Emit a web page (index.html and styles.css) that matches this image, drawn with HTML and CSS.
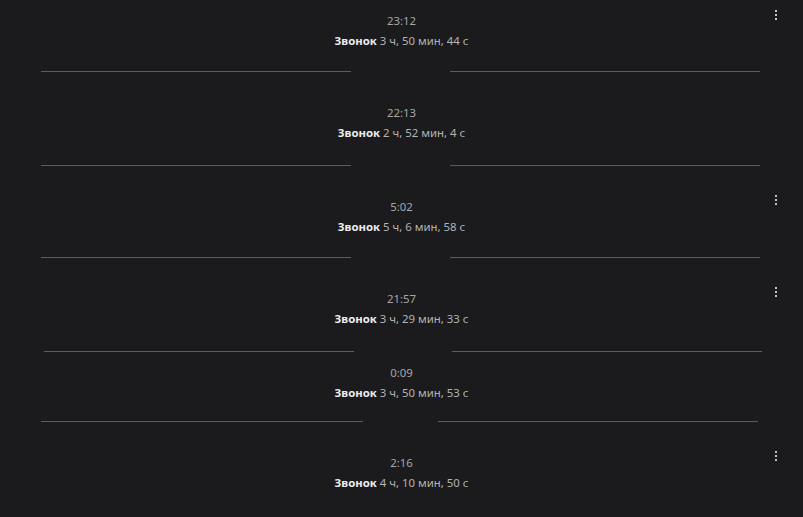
FILE: index.html
```html
<!DOCTYPE html>
<html>
<head>
    <meta charset="utf-8">
    <title>Звонки</title>
    <link rel="stylesheet" href="styles.css">
</head>
<body>
    <div class="log">
        <div class="call first">
            <div class="time">23:12</div>
            <div class="desc"><b>Звонок</b> 3 ч, 50 мин, 44 с</div>
            <span class="more"><i></i><i></i><i></i></span>
        </div>
        <div class="sep"><span></span><span></span></div>

        <div class="call">
            <div class="time">22:13</div>
            <div class="desc"><b>Звонок</b> 2 ч, 52 мин, 4 с</div>
        </div>
        <div class="sep"><span></span><span></span></div>

        <div class="call short">
            <div class="time">5:02</div>
            <div class="desc"><b>Звонок</b> 5 ч, 6 мин, 58 с</div>
            <span class="more"><i></i><i></i><i></i></span>
        </div>
        <div class="sep"><span></span><span></span></div>

        <div class="call">
            <div class="time">21:57</div>
            <div class="desc"><b>Звонок</b> 3 ч, 29 мин, 33 с</div>
            <span class="more"><i></i><i></i><i></i></span>
        </div>
        <div class="sep shifted"><span></span><span></span></div>

        <div class="call tight">
            <div class="time">0:09</div>
            <div class="desc"><b>Звонок</b> 3 ч, 50 мин, 53 с</div>
        </div>
        <div class="sep narrow"><span></span><span></span></div>

        <div class="call">
            <div class="time">2:16</div>
            <div class="desc"><b>Звонок</b> 4 ч, 10 мин, 50 с</div>
            <span class="more"><i></i><i></i><i></i></span>
        </div>
    </div>
</body>
</html>
```

FILE: styles.css
```css
* {
    margin: 0;
    padding: 0;
}
body {
    background: #1b1b1d;
    color: #a9a9a9;
    font-family: "Noto Sans", "Open Sans", sans-serif;
    font-size: 11.4px;
    overflow: hidden;
}
.call {
    position: relative;
    padding: 31px 0 22px;
    text-align: center;
    line-height: 20px;
}
.call.first {
    padding-top: 11px;
    padding-bottom: 20px;
}
.call.short {
    padding-bottom: 20px;
}
.call.tight {
    padding-top: 11px;
    padding-bottom: 18px;
}
.time {
    color: #a6a6a6;
}
.desc {
    color: #b3b3b3;
}
.desc b {
    color: #ececec;
    font-weight: bold;
}

/* menu button */
.more {
    position: absolute;
    right: 26px;
    top: 0;
    margin-top: 10px;
    display: flex;
    flex-direction: column;
    gap: 2px;
}
.call:not(.first) .more {
    margin-top: 29px;
}
.more i {
    display: block;
    width: 2px;
    height: 2px;
    background: #c4c4c4;
}

/* date divider */
.sep {
    display: flex;
    justify-content: space-between;
    margin: 0 43px 0 41px;
    height: 1px;
}
.sep span {
    width: 310px;
    background: #5c5c5c;
}
.sep.shifted {
    margin: 0 41px 0 44px;
}
.sep.narrow {
    margin: 0 45px 0 41px;
}
.sep.narrow span:first-child {
    width: 322px;
}
.sep.narrow span:last-child {
    width: 320px;
}
```
